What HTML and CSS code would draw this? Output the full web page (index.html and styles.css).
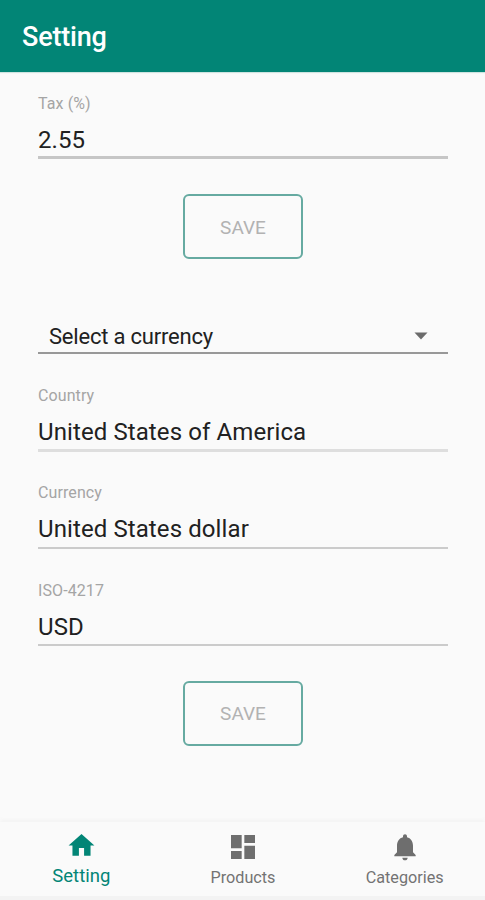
FILE: index.html
```html
<!DOCTYPE html>
<html lang="en">
    <head>
        <meta charset="utf-8">
        <title>Setting</title>
        <link rel="stylesheet" href="styles.css">
    </head>
    <body>
        <header>
            <h1>Setting</h1>
        </header>

        <main>
            <form class="tax">
                <div class="field">
                    <label>Tax (%)</label>
                    <p class="value">2.55</p>
                </div>
                <button type="button">SAVE</button>
            </form>

            <form class="currency">
                <div class="select">
                    <span>Select a currency</span>
                    <svg width="14" height="8" viewBox="0 0 14 8"><path d="M0.5 0.5h13L7 7.5z"/></svg>
                </div>
                <div class="field light">
                    <label>Country</label>
                    <p class="value">United States of America</p>
                </div>
                <div class="field thin">
                    <label>Currency</label>
                    <p class="value">United States dollar</p>
                </div>
                <div class="field thin iso">
                    <label>ISO-4217</label>
                    <p class="value">USD</p>
                </div>
                <button type="button">SAVE</button>
            </form>
        </main>

        <nav>
            <a class="active">
                <svg viewBox="0 0 24 24"><path d="M10 20v-6h4v6h5v-8h3L12 3 2 12h3v8z"/></svg>
                <span>Setting</span>
            </a>
            <a>
                <svg viewBox="0 0 24 24"><path d="M3 13h8V3H3v10zm0 8h8v-6H3v6zm10 0h8V11h-8v10zm0-18v6h8V3h-8z"/></svg>
                <span>Products</span>
            </a>
            <a>
                <svg viewBox="0 0 24 24"><path d="M12 22c1.1 0 2-.9 2-2h-4c0 1.1.89 2 2 2zm6-6v-5c0-3.07-1.64-5.64-4.5-6.32V4c0-.83-.67-1.5-1.5-1.5s-1.5.67-1.5 1.5v.68C7.63 5.36 6 7.92 6 11v5l-2 2v1h16v-1l-2-2z"/></svg>
                <span>Categories</span>
            </a>
        </nav>
    </body>
</html>
```

FILE: styles.css
```css
* {
    box-sizing: border-box;
}

body {
    margin: 0;
    height: 900px;
    display: flex;
    flex-direction: column;
    font-family: Roboto, sans-serif;
    background-color: #fafafa;
    color: #212121;
}

header {
    height: 72px;
    display: flex;
    align-items: center;
    padding: 2px 22px 0;
    background-color: #028576;
    box-shadow: 0 1px 1px #cfe3e0;
}

h1 {
    margin: 0;
    font-size: 27px;
    font-weight: 500;
    line-height: 32px;
    letter-spacing: -0.2px;
    color: white;
}

main {
    flex: 1;
    padding: 22px 37px 0 38px;
}

form {
    display: flex;
    flex-direction: column;
}

.currency {
    margin-top: 61px;
}

.field {
    height: 65px;
    border-bottom: 3px solid #c6c6c6;
}

.light {
    margin-top: 33px;
    border-color: #dedede;
}

.thin {
    margin-top: 32px;
    border-bottom: 2px solid #cbcbcb;
}

label {
    display: block;
    font-size: 16px;
    line-height: 20px;
    letter-spacing: 0.1px;
    color: #a5a5a5;
}

.light label, .thin label {
    margin-top: -1px;
}

.iso label {
    margin-top: 0;
}

.value {
    margin: 12px 0 0;
    font-size: 24px;
    line-height: 28px;
    letter-spacing: 0.1px;
    white-space: nowrap;
}

button {
    align-self: center;
    width: 120px;
    height: 65px;
    margin-top: 35px;
    padding: 1px 0 0;
    border: 2px solid #66aaa1;
    border-radius: 6px;
    background: none;
    font: 19px Roboto, sans-serif;
    color: #b2b2b2;
}

.currency button {
    padding: 0;
}

.select {
    height: 34px;
    display: flex;
    align-items: center;
    justify-content: space-between;
    padding: 0 20px 0 11px;
    border-bottom: 2px solid #989898;
    font-size: 22px;
    letter-spacing: -0.2px;
}

.select svg {
    fill: #6b6b6b;
}

nav {
    height: 78px;
    display: flex;
    border-bottom: 4px solid #f3f3f3;
    box-shadow: 0 -3px 3px #f5f5f5;
    color: #737373;
}

nav a {
    flex: 1;
    display: flex;
    flex-direction: column;
    align-items: center;
    padding: 9px 0 0 1px;
    font-size: 16.2px;
    line-height: 20px;
}

nav svg {
    width: 32px;
    height: 32px;
    margin-bottom: 5px;
    fill: #6e6e6e;
}

nav .active {
    padding-top: 8px;
    font-size: 18.5px;
    color: #028576;
}

.active svg {
    width: 31px;
    height: 31px;
    fill: #028576;
}
```
